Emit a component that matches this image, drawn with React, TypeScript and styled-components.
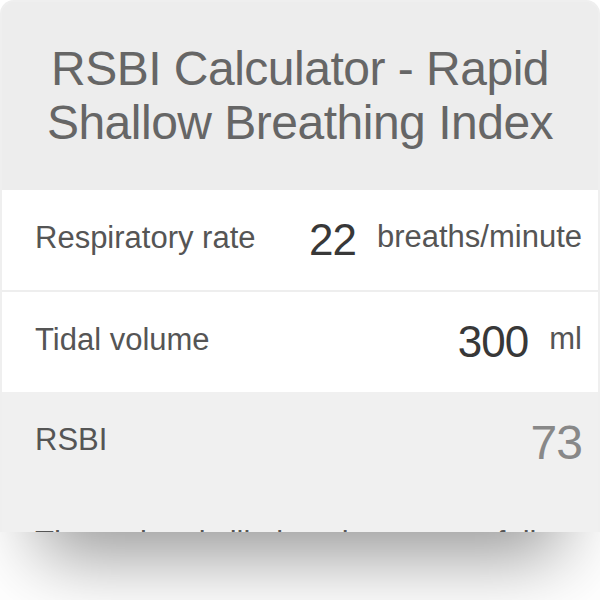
import React from "react";
import styled, { createGlobalStyle } from "styled-components";

const GlobalStyle = createGlobalStyle`
  html, body {
    margin: 0;
    padding: 0;
    background: #ffffff;
  }
  body {
    font-family: "Liberation Sans", Arial, Helvetica, sans-serif;
  }
  * { box-sizing: border-box; }
`;

const Page = styled.div`
  width: 600px;
  height: 600px;
  background: #ffffff;
  overflow: hidden;
`;

const Card = styled.section`
  width: 600px;
  height: 532px;
  overflow: hidden;
  background: #ededed;
  border: 2px solid #efefef;
  border-bottom: none;
  border-radius: 14px 14px 0 0;
  box-shadow: 0 63px 70px -40px rgba(0, 0, 0, 0.42);
  display: flex;
  flex-direction: column;
`;

const Header = styled.header`
  height: 188px;
  flex: none;
  display: flex;
  align-items: center;
  justify-content: center;
  padding: 0 20px;
`;

const Title = styled.h1`
  margin: 0;
  font-weight: 400;
  font-size: 48px;
  line-height: 54px;
  letter-spacing: -0.5px;
  color: #666666;
  text-align: center;
`;

const Row = styled.div<{ $divider?: boolean }>`
  height: ${(p) => (p.$divider ? 102 : 100)}px;
  flex: none;
  display: flex;
  align-items: center;
  background: #ffffff;
  padding: 0 16px 0 33px;
  border-top: ${(p) => (p.$divider ? "2px solid #eeeeee" : "none")};
`;

const Label = styled.span`
  flex: 1;
  font-size: 31px;
  color: #555555;
  margin-top: -4px;
`;

const Value = styled.span`
  font-size: 44px;
  letter-spacing: -1px;
  color: #383838;
`;

const Unit = styled.span`
  font-size: 31px;
  color: #555555;
  margin-left: 21px;
  margin-top: -6px;
`;

const Result = styled.div`
  flex: 1;
  background: #f0f0f0;
  display: flex;
  flex-direction: column;
`;

const ResultRow = styled.div`
  height: 100px;
  display: flex;
  align-items: center;
  padding: 0 16px 0 33px;
`;

const ResultValue = styled.span`
  font-size: 48px;
  letter-spacing: -1px;
  color: #888888;
`;

const Description = styled.p`
  margin: 29px 0 0;
  padding: 0 16px 0 33px;
  font-size: 31px;
  line-height: 43px;
  color: #555555;
`;

export default function App() {
  return (
    <>
      <GlobalStyle />
      <Page>
        <Card>
          <Header>
            <Title>
              RSBI Calculator - Rapid
              <br />
              Shallow Breathing Index
            </Title>
          </Header>
          <Row>
            <Label>Respiratory rate</Label>
            <Value>22</Value>
            <Unit>breaths/minute</Unit>
          </Row>
          <Row $divider>
            <Label>Tidal volume</Label>
            <Value>300</Value>
            <Unit>ml</Unit>
          </Row>
          <Result>
            <ResultRow>
              <Label>RSBI</Label>
              <ResultValue>73</ResultValue>
            </ResultRow>
            <Description>
              The patient is likely to be successfully weaned from the
              ventilator.
            </Description>
          </Result>
        </Card>
      </Page>
    </>
  );
}
